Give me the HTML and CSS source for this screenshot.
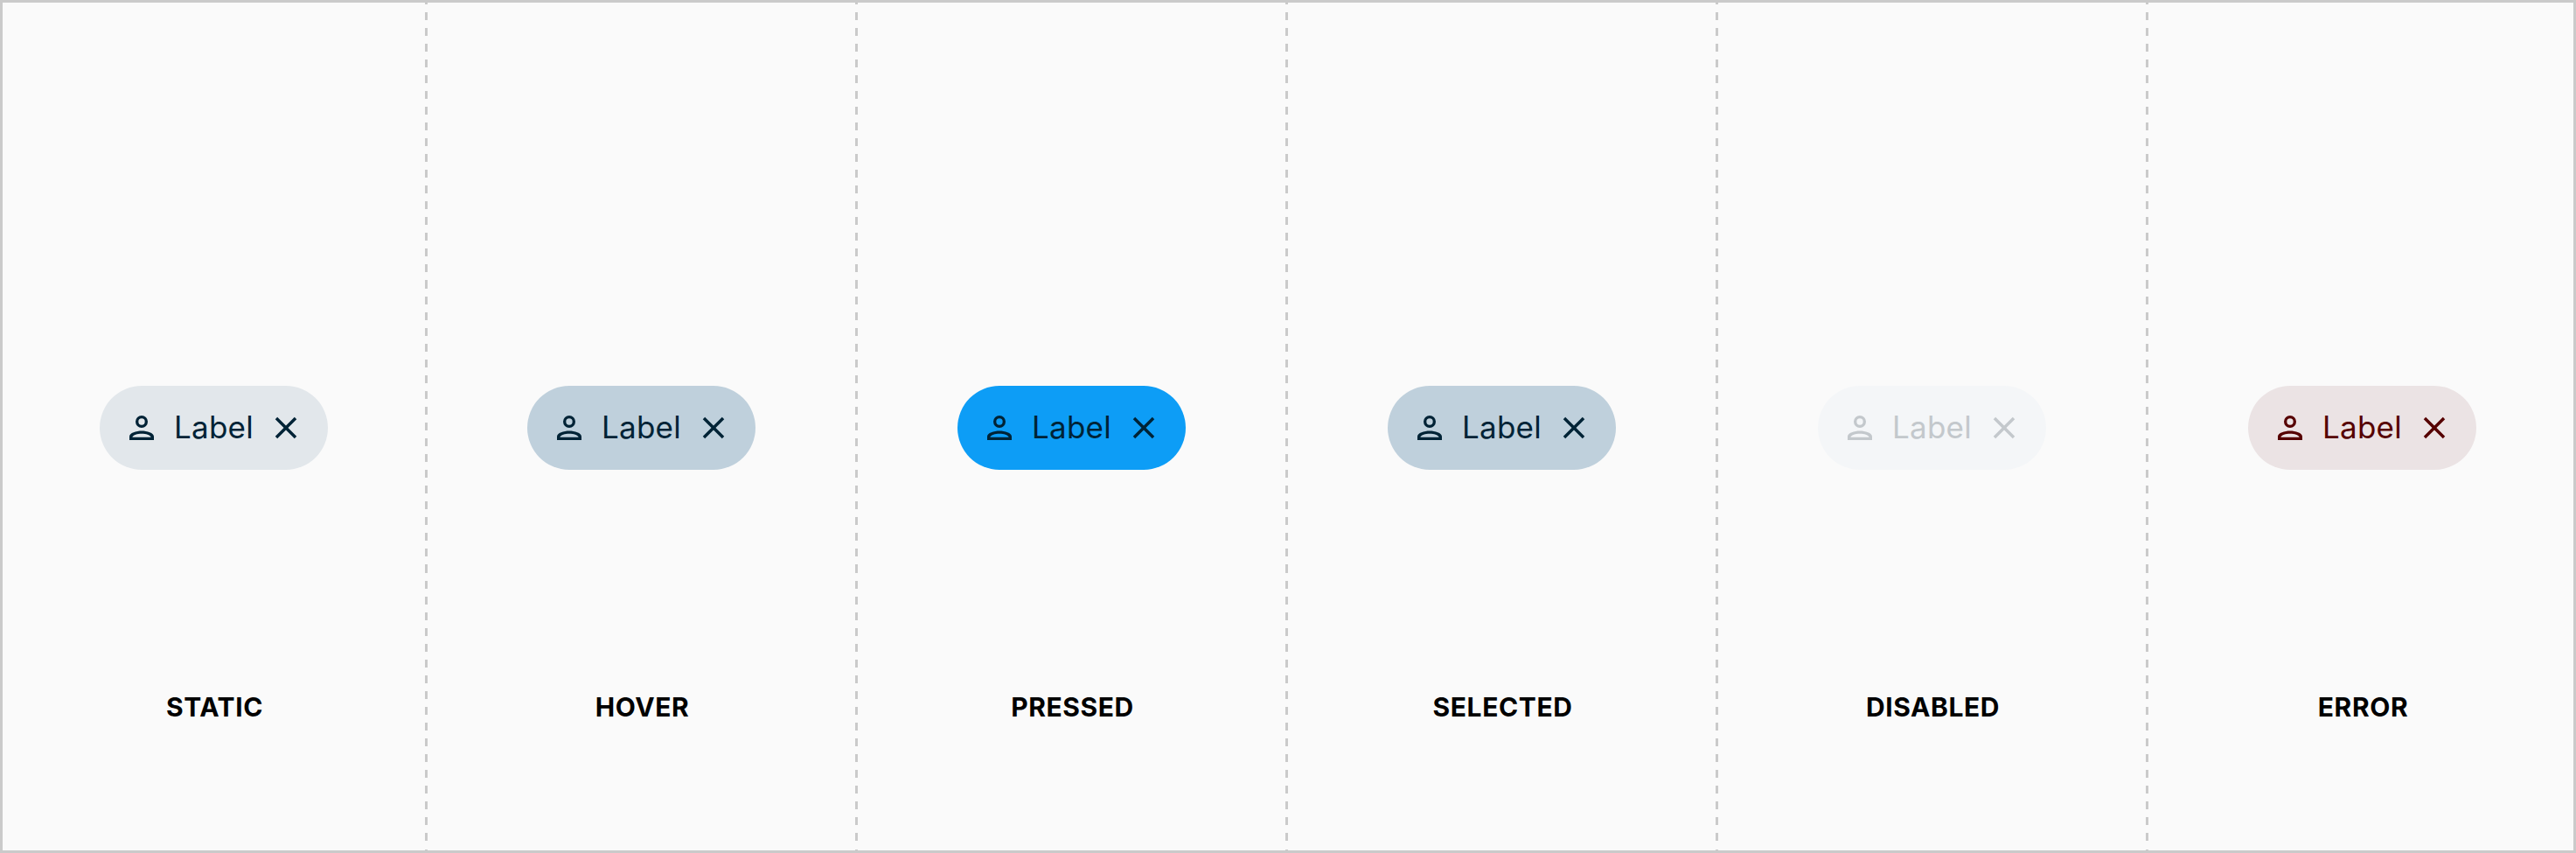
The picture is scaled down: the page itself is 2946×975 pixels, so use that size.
FILE: index.html
```html
<!DOCTYPE html>
<html lang="en">
<head>
    <meta charset="UTF-8">
    <meta name="viewport" content="width=device-width, initial-scale=1.0">
    <title>Chip States</title>
    <link rel="stylesheet" href="styles.css">
</head>
<body>
    <!-- Shared icons -->
    <svg class="icon-defs" width="0" height="0">
        <symbol id="icon-person" viewBox="0 0 24 24">
            <path fill-rule="evenodd" d="M12 4a4 4 0 1 0 0 8 4 4 0 0 0 0-8Zm0 1.900a2.100 2.100 0 1 1 0 4.200 2.100 2.100 0 0 1 0-4.200ZM12 14c-3.500 0-8 1.300-8 3.700V20h16v-2.300c0-2.400-4.500-3.700-8-3.700Zm0 1.900c2.900 0 5.400.8 6.100 2.200H5.900c.7-1.400 3.200-2.200 6.100-2.200Z"/>
        </symbol>
        <symbol id="icon-close" viewBox="0 0 24 24">
            <path d="M19 6.410L17.590 5 12 10.590 6.410 5 5 6.410 10.590 12 5 17.590 6.410 19 12 13.410 17.590 19 19 17.590 13.410 12Z"/>
        </symbol>
    </svg>

    <div class="states">
        <div class="state">
            <div class="chip">
                <svg class="icon"><use href="#icon-person"/></svg>
                <span class="label">Label</span>
                <svg class="icon"><use href="#icon-close"/></svg>
            </div>
            <h2>STATIC</h2>
        </div>
        <div class="state">
            <div class="chip chip-hover">
                <svg class="icon"><use href="#icon-person"/></svg>
                <span class="label">Label</span>
                <svg class="icon"><use href="#icon-close"/></svg>
            </div>
            <h2>HOVER</h2>
        </div>
        <div class="state">
            <div class="chip chip-pressed">
                <svg class="icon"><use href="#icon-person"/></svg>
                <span class="label">Label</span>
                <svg class="icon"><use href="#icon-close"/></svg>
            </div>
            <h2>PRESSED</h2>
        </div>
        <div class="state">
            <div class="chip chip-selected">
                <svg class="icon"><use href="#icon-person"/></svg>
                <span class="label">Label</span>
                <svg class="icon"><use href="#icon-close"/></svg>
            </div>
            <h2>SELECTED</h2>
        </div>
        <div class="state">
            <div class="chip chip-disabled">
                <svg class="icon"><use href="#icon-person"/></svg>
                <span class="label">Label</span>
                <svg class="icon"><use href="#icon-close"/></svg>
            </div>
            <h2>DISABLED</h2>
        </div>
        <div class="state">
            <div class="chip chip-error">
                <svg class="icon"><use href="#icon-person"/></svg>
                <span class="label">Label</span>
                <svg class="icon"><use href="#icon-close"/></svg>
            </div>
            <h2>ERROR</h2>
        </div>
    </div>
</body>
</html>
```
FILE: styles.css
```css
* {
    box-sizing: border-box;
}
body {
    margin: 0;
    font-family: Inter, sans-serif;
    background-color: #fafafa;
}
.icon-defs {
    display: block;
}
.states {
    display: grid;
    grid-template-columns: 486px repeat(4, 492px) 1fr;
    height: 975px;
    border: 3px solid #cacaca;
}
.state {
    display: flex;
    flex-direction: column;
    align-items: center;
    padding: 438px 3px 0 0;
    background: repeating-linear-gradient(to bottom, #cacaca 0 1.51px, transparent 1.51px 10.54px, #cacaca 10.54px 18.056px) right top / 3px 100% no-repeat;
}
.state:last-child {
    padding: 438px 0 0 3px;
    background: none;
}
.chip {
    display: flex;
    align-items: center;
    justify-content: space-between;
    width: 261px;
    height: 96px;
    padding: 0 27px;
    border-radius: 48px;
    background-color: #e2e7eb;
    color: #002336;
}
.chip-hover,
.chip-selected {
    background-color: #bfd0dc;
}
.chip-pressed {
    background-color: #0d9df6;
}
.chip-disabled {
    background-color: #f4f6f8;
    color: #c3c8cc;
}
.chip-error {
    background-color: #ebe3e4;
    color: #560000;
}
.label {
    margin-bottom: 2px;
    font-size: 35px;
    line-height: 42px;
    letter-spacing: 0.2px;
}
.icon {
    width: 42px;
    height: 42px;
    fill: currentColor;
}
h2 {
    margin: 253px 0 0;
    padding-left: 2px;
    font-size: 30px;
    line-height: 36px;
    font-weight: 700;
    letter-spacing: 0.6px;
    color: #000;
}
```
